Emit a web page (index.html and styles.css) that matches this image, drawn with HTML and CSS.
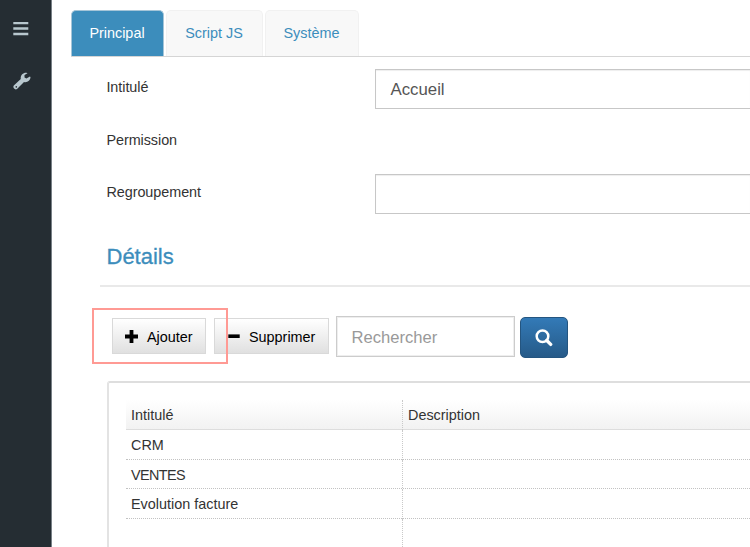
FILE: index.html
```
<!DOCTYPE html>
<html lang="fr">
<head>
<meta charset="utf-8">
<title>Accueil</title>
<link rel="stylesheet" href="styles.css">
</head>
<body>
<div class="app">
  <aside class="sidebar">
    <svg class="menu" width="16" height="14" viewBox="0 0 16 14"><path d="M.3 1.1h15M.3 6.5h15M.3 12h15" stroke="#b8c7ce" stroke-width="2.5"/></svg>
    <svg class="wrench" width="18" height="18" viewBox="0 0 18 18"><path fill="#b8c7ce" fill-rule="evenodd" d="M.8 13.5 7.8 7C7.1 3.5 9.8.4 13.5.7L14.5 1.3 11.5 3.1V5.5L13.4 6.5 16.9 4.5 17.5 5C17.3 8.7 14.2 10.8 11 10L4 17C2 18.4-.7 15.7.8 13.5ZM3.3 14.1a.8.8 0 1 0 0 1.6.8.8 0 0 0 0-1.6Z"/></svg>
  </aside>
  <main class="content">
    <nav class="tabs">
      <a class="tab active"><span>Principal</span></a>
      <a class="tab script"><span>Script JS</span></a>
      <a class="tab system"><span>Système</span></a>
    </nav>
    <form class="form">
      <label>Intitulé</label><div class="field">Accueil</div>
      <label>Permission</label><div></div>
      <label>Regroupement</label><div class="field"></div>
    </form>
    <h2>Détails</h2>
    <div class="toolbar">
      <button class="btn add"><svg width="13" height="13" viewBox="0 0 13 13"><path d="M6.5 0v13M0 6.5h13" stroke="#000" stroke-width="3.8"/></svg><span>Ajouter</span></button>
      <button class="btn remove"><svg width="12" height="13" viewBox="0 0 12 13"><path d="M.3 6.2h11.4" stroke="#000" stroke-width="3.6"/></svg><span>Supprimer</span></button>
      <div class="search">Rechercher</div>
      <button class="go"><svg width="18" height="18" viewBox="0 0 18 18" fill="none" stroke="#fff"><circle cx="7.5" cy="7.2" r="5.8" stroke-width="2.5"/><path d="m11.8 11.5 3.9 3.9" stroke-width="3.3" stroke-linecap="round"/></svg></button>
      <div class="highlight"></div>
    </div>
    <section class="panel">
      <div class="grid">
        <div class="row head"><div>Intitulé</div><div>Description</div></div>
        <div class="row"><div>CRM</div><div></div></div>
        <div class="row"><div class="tight">VENTES</div><div></div></div>
        <div class="row"><div>Evolution facture</div><div></div></div>
        <div class="row last"><div></div><div></div></div>
      </div>
    </section>
  </main>
</div>
</body>
</html>
```
FILE: styles.css
```
* { box-sizing: border-box; }
body { margin: 0; background: #fff; color: #333; font: 14.4px/20px "Liberation Sans", Arial, sans-serif; }
svg { display: block; flex: none; }
.app { display: flex; width: 750px; height: 547px; overflow: hidden; }
.sidebar { flex: none; width: 52px; padding: 22px 0 0 13px; background: #252d33; border-right: 1px solid #788086; }
.wrench { margin-top: 36px; }
.content { flex: none; width: 698px; padding: 10px 0 0 19px; }
.tabs { display: flex; gap: 2px; height: 47px; border-bottom: 1px solid #d5d5d5; }
.tab { display: flex; align-items: center; justify-content: center; width: 97px; height: 46px; padding: 0 1px 2px 0; background: #f8f8f8; border: 1px solid #f1f1f1; border-bottom: 0; border-radius: 5px 5px 0 0; color: #3c8dbc; }
.tab.active { width: 93px; background: #3c8dbc; border-color: #a5c5d8; color: #fff; }
.tab.system { width: 94px; }
.form { display: grid; grid-template-columns: 269px 1fr; grid-auto-rows: 40px; row-gap: 12.5px; margin: 12px 0 0 35px; }
.form label { padding: 8px 0 0 .4px; letter-spacing: -.05px; }
.field { display: flex; align-items: center; padding: 2px 0 0 14.5px; border: 1px solid #c7c7c7; border-right: 0; box-shadow: inset 0 1px 1px #eee; color: #555; font-size: 16.8px; }
h2 { height: 45px; margin: 28px 0 0 29px; padding: 1px 0 0 6.5px; border-bottom: 2px solid #e9e9e9; color: #3c8dbc; font-size: 22px; font-weight: 400; line-height: 28px; -webkit-text-stroke: .3px #3c8dbc; }
.toolbar { position: relative; display: flex; height: 41px; margin: 29px 0 0 41px; }
button { font: inherit; color: #000; }
.btn { display: flex; align-items: center; height: 36px; margin: 2px 8px 0 0; padding: 0 0 0 12px; border: 1px solid #d9d9d9; background: linear-gradient(#fff, #e0e0e0); }
.btn span { margin: 1px 0 0 9px; }
.add { width: 94px; }
.remove { width: 115px; padding-left: 13px; margin-right: 7px; }
.search { width: 179px; height: 41px; padding: 10px 0 0 14.5px; border: 1px solid #ccc; box-shadow: inset 0 0 0 1px #eee; color: #999; font-size: 16.6px; line-height: 21px; }
.go { display: flex; align-items: center; justify-content: center; width: 48px; height: 41px; margin: 1px 0 0 5px; padding: 0; border: 1px solid #245580; border-radius: 5px; background: linear-gradient(#337ab7, #265a88); }
.highlight { position: absolute; left: -20px; top: -8px; width: 136px; height: 56px; border: 2px solid #ff9a94; }
.panel { height: 180px; margin: 24px 0 0 36px; padding: 17px 0 0 17px; border-left: 2px solid #e3e3e3; border-top: 2px solid #dedede; border-radius: 3px 0 0 0; }
.row { display: grid; grid-template-columns: 276px 1fr; height: 29.8px; border-bottom: 1px dotted #c2c2c2; }
.row > div { padding: 5px; }
.row > div + div { border-left: 1px dotted #c9c9c9; }
.row > .tight { letter-spacing: -.6px; }
.head { background: linear-gradient(#fff, #f2f2f2); border-bottom: 1px solid #ddd; }
.last { border-bottom: 0; }
```
